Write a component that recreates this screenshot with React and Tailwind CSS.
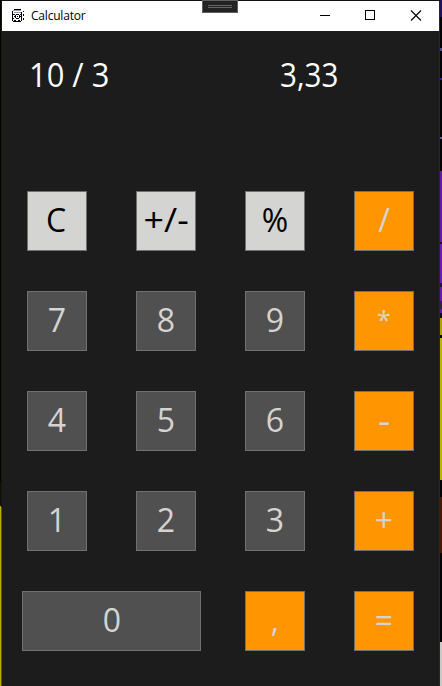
const KEY = "flex h-[60px] w-[60px] items-center justify-center border border-[#707070] text-[32px] leading-none";

const TONES = {
  light: "bg-[#d4d4d2] text-black",
  dark: "bg-[#505050] text-[#d4d4d2]",
  orange: "bg-[#ff9500] text-[#d4d4d2]",
};

// Optical corrections for individual glyphs.
const GLYPHS = {
  "+/-": "-top-px scale-x-[1.12]",
  "*": "-top-[2px] text-[26px]",
  "-": "top-0 scale-x-[1.2]",
  C: "-top-px -left-px",
};

const ROWS = [
  [["C", "light"], ["+/-", "light"], ["%", "light"], ["/", "orange"]],
  [["7", "dark"], ["8", "dark"], ["9", "dark"], ["*", "orange"]],
  [["4", "dark"], ["5", "dark"], ["6", "dark"], ["-", "orange"]],
  [["1", "dark"], ["2", "dark"], ["3", "dark"], ["+", "orange"]],
];

function Key({ label, tone }) {
  return (
    <button type="button" className={`${KEY} ${TONES[tone]}`}>
      <span className={`relative whitespace-nowrap ${GLYPHS[label] || "-top-px"}`}>{label}</span>
    </button>
  );
}

function AppIcon() {
  return (
    <svg className="ml-[10px] h-4 w-4" viewBox="0 0 16 16" fill="none" stroke="#000" shapeRendering="crispEdges">
      <path d="M2 1.5h7M1 13.5h8M.5 3v10M9.5 4v9" />
      <path d="M1 2.5h8M2 4.5h7" stroke="#999" />
      <path d="M1 6.5h2M4 6.5h3M8 6.5h1M2 8.5h1M5 8.5h1M8 8.5h1M1 10.5h1M4 10.5h3M2 12.5h2M6 12.5h2M3.5 7v3M7.5 7v3" />
      <path d="M11.5 3v1M11.5 6v2M11.5 10v2" />
    </svg>
  );
}

export default function App() {
  return (
    <div className="relative flex h-[686px] w-[442px] overflow-hidden bg-[#141217] pt-px font-['Open_Sans','Noto_Sans',sans-serif]">
      <div className="-mt-px flex w-px flex-col bg-[#050505]">
        <div className="h-[482px]" />
        <div className="h-[24px] bg-[#101008]" />
        <div className="flex-1 bg-[#b9ad00]" />
      </div>
      <div className="flex w-px flex-col bg-[#17170f]">
        <div className="h-[506px]" />
        <div className="flex-1 bg-[#5c5705]" />
      </div>
      <main className="flex w-[437px] flex-col bg-[#1c1c1c]">
        <header className="flex h-[30px] items-center bg-white">
          <AppIcon />
          <h1 className="ml-[3px] text-[12px] tracking-[-0.2px] text-black">Calculator</h1>
          <svg className="ml-auto h-[30px] w-[138px]" viewBox="0 0 138 30" fill="none" stroke="#000">
            <path d="M19 14.5h10" shapeRendering="crispEdges" />
            <path d="M64.5 9.5h9v9h-9z" shapeRendering="crispEdges" />
            <path d="M110 9.5l10 10M120 9.5l-10 10" strokeWidth="1.1" />
          </svg>
        </header>
        <section className="flex h-[160px] pt-[22px] text-[32px] leading-[44px] text-white">
          <div className="w-[250px] pl-[27px]">
            <span className="inline-block origin-left scale-x-[0.965]">10 / 3</span>
          </div>
          <div className="pl-[28px]">
            <span className="inline-block origin-left scale-x-[0.925]">3,33</span>
          </div>
        </section>
        <section className="flex flex-col gap-[40px]">
          {ROWS.map((row) => (
            <div key={row[0][0]} className="flex gap-[49px] pl-[25px]">
              {row.map(([label, tone]) => (
                <Key key={label} label={label} tone={tone} />
              ))}
            </div>
          ))}
          <div className="flex pl-[20px]">
            <button type="button" className="mr-[44px] flex h-[60px] w-[179px] items-center justify-center border border-[#707070] bg-[#505050] text-[32px] leading-none text-[#d4d4d2]">
              <span className="relative -top-px left-[0.5px]">0</span>
            </button>
            <div className="flex gap-[49px]">
              <Key label="," tone="orange" />
              <Key label="=" tone="orange" />
            </div>
          </div>
        </section>
      </main>
      <div className="w-px bg-[#262626]" />
      <div className="-mt-px flex w-[2px] flex-col bg-[#030305]">
        <div className="h-[17px] bg-[#211155]" />
        <div className="h-[31px]" />
        <div className="h-[3px] bg-[#4a4a90]" />
        <div className="h-[27px]" />
        <div className="h-[2px] bg-[#42158a]" />
        <div className="h-[57px]" />
        <div className="h-[2px] bg-[#5c5ca0]" />
        <div className="h-[32px]" />
        <div className="h-[71px] bg-[#6416ae]" />
        <div className="h-[2px] bg-[#160c24]" />
        <div className="h-[39px] bg-[#6b19ba]" />
        <div className="h-[4px] bg-[#251238]" />
        <div className="h-[14px] bg-[#6718b0]" />
        <div className="h-[8px] bg-[#30204a]" />
        <div className="h-[4px] bg-[#5b18a0]" />
        <div className="h-[5px] bg-[#100a14]" />
        <div className="h-[17px] bg-[#b1a000]" />
        <div className="h-[3px]" />
        <div className="h-[142px] bg-[#beb400]" />
        <div className="h-[17px]" />
        <div className="h-[56px] bg-[#461900]" />
        <div className="h-[89px]" />
        <div className="flex-1 bg-[#cbc8c8]" />
      </div>
      <div className="absolute left-[202px] top-0 flex h-[13px] w-[36px] flex-col items-center gap-px border border-[#606060] bg-[#222222] pt-[4px]">
        <div className="h-px w-6 bg-[#666]" />
        <div className="h-px w-6 bg-[#666]" />
      </div>
    </div>
  );
}
